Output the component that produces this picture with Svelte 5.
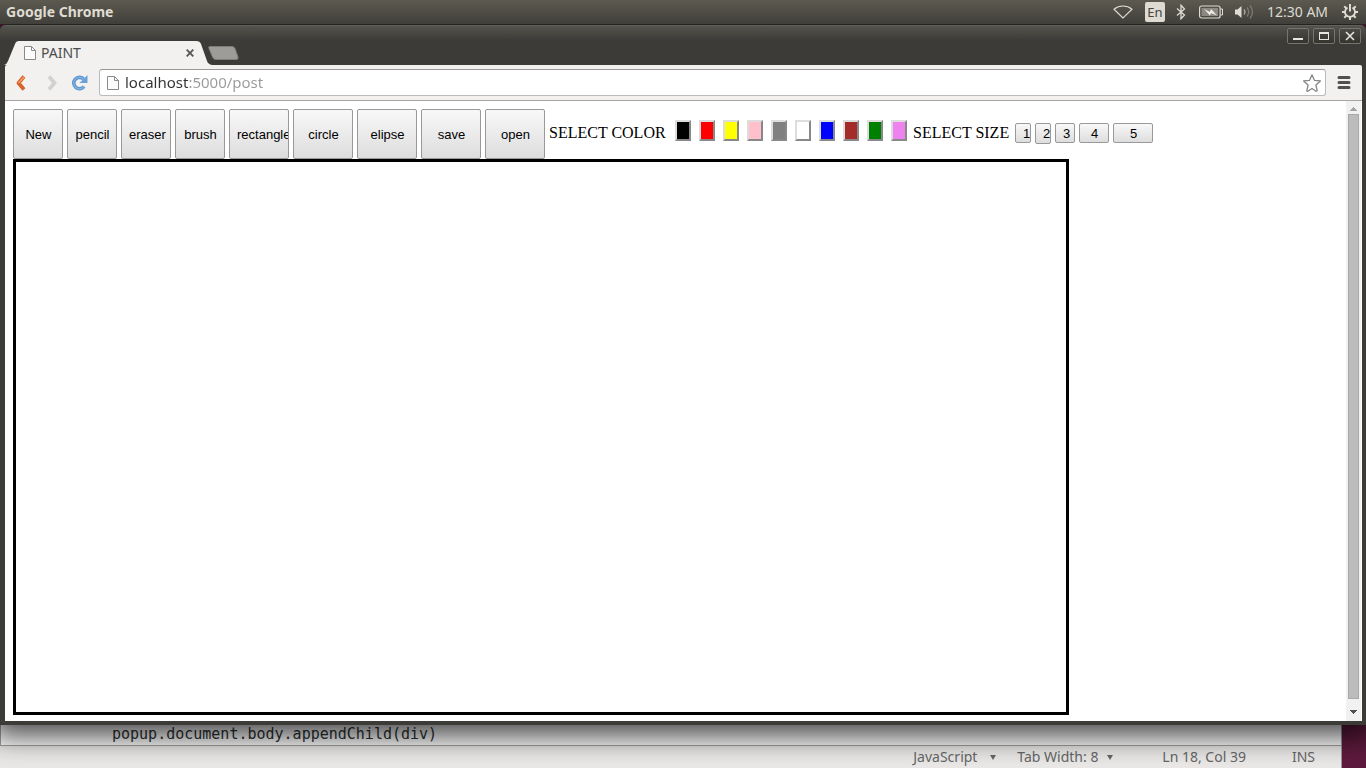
<script>
  const tools = [
    { name: 'New' },
    { name: 'pencil' },
    { name: 'eraser' },
    { name: 'brush' },
    { name: 'rectangle', wide: true },
    { name: 'circle', wide: true },
    { name: 'elipse', wide: true },
    { name: 'save', wide: true },
    { name: 'open', wide: true },
  ];

  const colors = ['black', 'red', 'yellow', 'pink', 'gray', 'white', 'blue', 'brown', 'green', 'violet'];

  const sizes = [
    { n: 1, width: 16, height: 20 },
    { n: 2, width: 16, height: 21 },
    { n: 3, width: 20, height: 20 },
    { n: 4, width: 30, height: 20 },
    { n: 5, width: 40, height: 20 },
  ];

  let tool = $state('pencil');
  let color = $state('black');
  let size = $state(1);
  let url = $state('localhost:5000/post');
  let canvas;
  let drawing = false;

  function pick(name) {
    if (name === 'New') {
      canvas.getContext('2d').clearRect(0, 0, canvas.width, canvas.height);
      return;
    }
    tool = name;
  }

  function start(e) {
    drawing = true;
    const ctx = canvas.getContext('2d');
    ctx.beginPath();
    ctx.moveTo(e.offsetX, e.offsetY);
  }

  function move(e) {
    if (!drawing) return;
    const ctx = canvas.getContext('2d');
    ctx.strokeStyle = tool === 'eraser' ? 'white' : color;
    ctx.lineWidth = tool === 'brush' ? size * 4 : size;
    ctx.lineTo(e.offsetX, e.offsetY);
    ctx.stroke();
  }

  function stop() {
    drawing = false;
  }
</script>

{#snippet page()}
  <svg class="page-icon" width="12" height="14" viewBox="0 0 12 14">
    <path d="M.5.5h7l4 4v9H.5z" fill="#fcfcfc" stroke="#8a8a8a" />
    <path d="M7.5.5v4h4" fill="none" stroke="#8a8a8a" />
  </svg>
{/snippet}

<div class="desktop">
  <header class="panel">
    <strong>Google Chrome</strong>
    <div class="indicators">
      <svg width="20" height="14" viewBox="0 0 20 14" fill="none" stroke="#dfdbd2" stroke-width="1.1">
        <path d="M10 13 1 4.2Q5 1 10 1t9 3.2z" />
      </svg>
      <span class="lang">En</span>
      <svg class="bluetooth" width="10" height="16" viewBox="0 0 10 16" fill="none" stroke="#dfdbd2" stroke-width="1.3">
        <path d="M1 4.5 8.5 11 5 14.8V1.2L8.5 5 1 11.5" />
      </svg>
      <svg class="battery" width="24" height="14" viewBox="0 0 24 14">
        <rect x=".6" y="1" width="20.5" height="12" rx="2" fill="none" stroke="#dfdbd2" stroke-width="1.2" />
        <path d="M21.5 4h2v6h-2" fill="none" stroke="#dfdbd2" />
        <rect x="2.5" y="3" width="16.5" height="8" fill="#8b8982" />
        <path d="m5 4 6 3 1-3 6 6.5-6-2.5-1 2.5z" fill="#f2efe8" />
      </svg>
      <svg width="21" height="16" viewBox="0 0 21 16" fill="none">
        <path d="M1 5.5h2.5L7.5 2v12L3.5 10.500H1z" fill="#dfdbd2" />
        <path d="M10 5.500q2 2.500 0 5" stroke="#aaa79f" stroke-width="1.300" />
        <path d="M13 3.500q3.500 4.500 0 9M16 1.500q5 6.500 0 13" stroke="#7c7a73" stroke-width="1.300" />
      </svg>
      <span class="clock">12:30 AM</span>
      <svg width="16" height="16" viewBox="0 0 16 16" fill="none" stroke="#dfdbd2">
        <path d="M5.500 3.600a5 5 0 1 0 5 0" stroke-width="1.800" />
        <path d="M8 0v7.500" stroke-width="2" />
        <path d="M0 8h3.500M12.500 8H16M8 12.500V16M2.300 2.300l2.300 2.300M13.700 2.300l-2.300 2.300M2.300 13.700l2.300-2.300M13.700 13.700l-2.300-2.300" stroke-width="2" />
      </svg>
    </div>
  </header>

  <main class="window">
    <div class="titlebar">
      <div class="tab">
        <svg class="tab-shape" width="208" height="24" viewBox="0 0 208 24">
          <path d="M0 24q3-1 4-4l7-17q1-3 4-3h177q4 0 5 3l6 17q1 3 5 4z" fill="#f2f1f0" />
        </svg>
        {@render page()}
        <span>PAINT</span>
        <button class="close-tab" aria-label="Close tab">
          <svg width="8" height="8" viewBox="0 0 8 8" stroke="#555" stroke-width="1.800">
            <path d="m.7.7 6.600 6.600M7.300.7.7 7.300" />
          </svg>
        </button>
      </div>
      <button class="new-tab" aria-label="New tab">
        <svg width="31" height="14" viewBox="0 0 31 14">
          <path d="M1.500.5H24q2 0 3 2l3 8.500q.5 2.500-1.500 2.500H8q-2.500 0-3.500-2.500L1 2.500Q.3.5 1.500.5z" fill="#9d9c99" stroke="#7e7d79" />
        </svg>
      </button>
      <div class="controls">
        <button aria-label="Minimize">
          <svg width="20" height="14" viewBox="0 0 20 14"><path d="M5 9h10v2H5z" fill="#e8e6e0" /></svg>
        </button>
        <button aria-label="Maximize">
          <svg width="20" height="14" viewBox="0 0 20 14"><path d="M5 3h10v8H5zm1 2v5h8V5z" fill="#e8e6e0" fill-rule="evenodd" /></svg>
        </button>
        <button aria-label="Close">
          <svg width="20" height="14" viewBox="0 0 20 14"><path d="m6 3 8 8m0-8-8 8" stroke="#e8e6e0" stroke-width="1.600" /></svg>
        </button>
      </div>
    </div>

    <nav class="toolbar">
      <button aria-label="Back">
        <svg width="12" height="18" viewBox="0 0 12 18" fill="none">
          <path d="M9 2.500 3.500 9l5.500 6.500" stroke="#d9622a" stroke-width="3.800" stroke-linejoin="round" />
          <path d="M9 3 3.500 9" stroke="#f09a62" stroke-width="1.800" />
        </svg>
      </button>
      <button class="forward" aria-label="Forward">
        <svg width="12" height="18" viewBox="0 0 12 18" fill="none">
          <path d="M3 2.500 8.500 9l-5.500 6.500" stroke="#d3d1cf" stroke-width="3.800" />
        </svg>
      </button>
      <button class="reload" aria-label="Reload">
        <svg width="18" height="18" viewBox="0 0 18 18" fill="none">
          <path d="M13 12.500A5.700 5.700 0 1 1 12.500 5" stroke="#5c94cf" stroke-width="3.600" />
          <path d="M16.500 1v8h-8z" fill="#6ba1d8" />
          <path d="M12.500 13A5.700 5.700 0 1 1 12 4.700" stroke="#86b4e2" stroke-width="1.200" />
        </svg>
      </button>
      <div class="address">
        {@render page()}
        <input type="text" aria-label="Address" spellcheck="false" bind:value={url} />
        <button aria-label="Bookmark this page">
          <svg width="18" height="18" viewBox="0 0 18 18">
            <path d="m9 .8 2.400 5.500 6 .6-4.500 4 1.300 5.900q-1 .7-1.500.2L9 14.500 5.300 17q-1 .5-1.500-.2l1.300-5.900-4.500-4 6-.6z" fill="#fff" stroke="#858585" stroke-width="1.300" stroke-linejoin="round" />
          </svg>
        </button>
      </div>
      <button class="menu" aria-label="Menu">
        <svg width="14" height="13" viewBox="0 0 14 13" stroke="#505050" stroke-width="3" stroke-linecap="round">
          <path d="M2 1.500h10M2 6.500h10M2 11.500h10" />
        </svg>
      </button>
    </nav>

    <div class="view">
      <div class="paint">
        <div class="options">
          {#each tools as t}
            <button class="btn tool" class:wide={t.wide} onclick={() => pick(t.name)}>{t.name}</button>
          {/each}
          <span class="label color-label">SELECT COLOR</span>
          <div class="swatches">
            {#each colors as c}
              <button class="swatch" style="background: {c}" aria-label={c} onclick={() => (color = c)}></button>
            {/each}
          </div>
          <span class="label size-label">SELECT SIZE</span>
          <div class="sizes">
            {#each sizes as s}
              <button class="btn" style="width: {s.width}px; height: {s.height}px" onclick={() => (size = s.n)}>{s.n}</button>
            {/each}
          </div>
        </div>
        <canvas
          bind:this={canvas}
          width="1050"
          height="550"
          onmousedown={start}
          onmousemove={move}
          onmouseup={stop}
        ></canvas>
      </div>
      <div class="scrollbar">
        <svg width="15" height="13" viewBox="0 0 15 13"><path d="M7 6h1v1h1v1h1v1h1v1H4V9h1V8h1V7h1z" fill="#a3a3a3" /></svg>
        <div class="thumb"></div>
        <svg width="15" height="22" viewBox="0 0 15 22"><path d="M4 11h7v1h-1v1H9v1H8v1H7v-1H6v-1H5v-1H4z" fill="#505050" /></svg>
      </div>
    </div>
  </main>

  <footer class="editor">
    <code>popup.document.body.appendChild(div)</code>
    <div class="status">
      <button class="language">JavaScript <i></i></button>
      <button class="tabs">Tab Width: 8 <i></i></button>
      <span class="cursor">Ln 18, Col 39</span>
      <span>INS</span>
    </div>
  </footer>
</div>

<style>
  :global(body) { margin: 0; background: #5e1a3e; }

  .desktop { display: flex; flex-direction: column; min-height: 100vh; font-family: "Noto Sans", "Open Sans", sans-serif; background: #5e1a3e; overflow: hidden; }
  button { padding: 0; border: 0; background: none; font: inherit; color: inherit; }
  svg { display: block; flex: none; }

  .panel { position: relative; z-index: 1; display: flex; justify-content: space-between; align-items: center; height: 24px; padding: 0 8px 0 6px; background: linear-gradient(#5c5a50, #403f3a); color: #dfdbd2; font-size: 14px; line-height: 24px; }
  .indicators { display: flex; align-items: center; }
  .lang { width: 20px; height: 20px; margin: 0 11px 0 12px; border-radius: 2px; background: #dfdbd2; color: #45443f; text-align: center; line-height: 20px; font-size: 13px; }
  .battery { margin: 0 11px 0 13px; }
  .clock { width: 63px; margin: 0 12px; white-space: nowrap; }

  .window { position: relative; flex: 1; display: flex; flex-direction: column; box-sizing: border-box; border: solid #3c3b37; border-width: 0 4px 4px 5px; border-radius: 6px 6px 0 0; background: #3c3b37; box-shadow: 0 4px 28px 8px rgba(0, 0, 0, 0.7); }

  .titlebar { display: flex; align-items: flex-end; height: 41px; margin: 0 -4px 0 -5px; padding: 0 5px 0 4px; box-sizing: border-box; border-top: 1px solid #25241f; border-radius: 6px 6px 0 0; background: linear-gradient(#6e6d67 0, #53524c 1px, #3c3b37 16px); }
  .tab { position: relative; display: flex; align-items: center; width: 208px; height: 24px; box-sizing: border-box; padding: 0 18px 0 20px; color: #4c4c4c; font-size: 14px; line-height: 24px; }
  .tab-shape { position: absolute; left: 0; top: 0; }
  .tab span { position: relative; flex: 1; margin-left: 5px; }
  .page-icon { position: relative; }
  .close-tab { position: relative; }
  .new-tab { margin: 0 auto 5px -4px; }
  .controls { display: flex; align-self: flex-start; gap: 4px; margin-top: 3px; }
  .controls button { border: 1px solid #77756f; border-radius: 2px; background: linear-gradient(#4b4a45, #35342f); }

  .toolbar { display: flex; align-items: center; height: 36px; box-sizing: border-box; padding: 0 11px 0 10px; border-bottom: 1px solid #a5a5a5; border-radius: 2px 2px 0 0; background: #f2f1f0; }
  .forward { margin-left: 19px; }
  .reload { margin: 0 10px 0 13px; }
  .address { flex: 1; display: flex; align-items: center; height: 27px; box-sizing: border-box; padding: 0 4px 0 7px; border: 1px solid #bbb; border-top-color: #989898; border-radius: 3px; background: #fff; }
  /* host part dark, the rest of the address grey */
  .address input { flex: 1; min-width: 0; height: 25px; box-sizing: border-box; margin-left: 6px; padding: 0 0 2px; border: 0; outline: 0; font: 15px/22px "Noto Sans", "Open Sans", sans-serif; color: transparent; background: linear-gradient(90deg, #333 64px, #999 64px); background-clip: text; -webkit-background-clip: text; }
  .menu { margin-left: 11px; }

  .view { flex: 1; display: flex; background: #fff; }
  .paint { flex: 1; min-width: 0; padding: 8px 0 6px 8px; }
  .options { display: flex; gap: 4px; white-space: nowrap; font: 16px/18px "Liberation Serif", serif; color: #000; }
  .btn { flex: none; box-sizing: border-box; padding: 1px 6px 0 7px; border: 1px solid #999; border-radius: 2px; background: linear-gradient(#f8f8f8, #ddd); color: #000; font: 13px/16px "Liberation Sans", Arial, sans-serif; overflow: hidden; text-align: center; }
  .tool { width: 50px; height: 50px; }
  .wide { width: 60px; }
  .label { padding-top: 15px; }
  .color-label { width: 120px; }
  .size-label { width: 98px; }
  .swatches { display: flex; gap: 8px; padding: 11px 2px 0; }
  .swatch { width: 16px; height: 21px; border: 2px solid; border-color: #ddd #888 #888 #ddd; }
  .sizes { display: flex; align-items: flex-start; gap: 4px; padding-top: 14px; }
  canvas { display: block; border: 3px solid #000; }

  .scrollbar { display: flex; flex-direction: column; width: 15px; margin-right: 1px; background: #f1f1f1; }
  .thumb { flex: 1; margin: 0 2px; border: 1px solid #a8a8a8; background: #bcbcbc; }

  .editor { margin-right: 24px; height: 43px; background: #eae9e7; border-right: 1px solid #999; box-sizing: border-box; }
  code { display: block; height: 20px; padding-left: 111px; border-bottom: 1px solid #a0a0a0; border-left: 1px solid #a0a0a0; background: #fff; color: #2e3436; font: 15px/18px "DejaVu Sans Mono", monospace; }
  .status { display: flex; justify-content: flex-end; padding-right: 26px; color: #666; font-size: 14px; line-height: 22px; white-space: nowrap; }
  .status button { display: flex; justify-content: space-between; align-items: center; }
  .status i { border: 3px solid transparent; border-top: 5px solid #666; border-bottom: 0; }
  .language { width: 83px; }
  .tabs { width: 96px; margin: 0 49px 0 21px; }
  .cursor { margin-right: 46px; }
</style>
